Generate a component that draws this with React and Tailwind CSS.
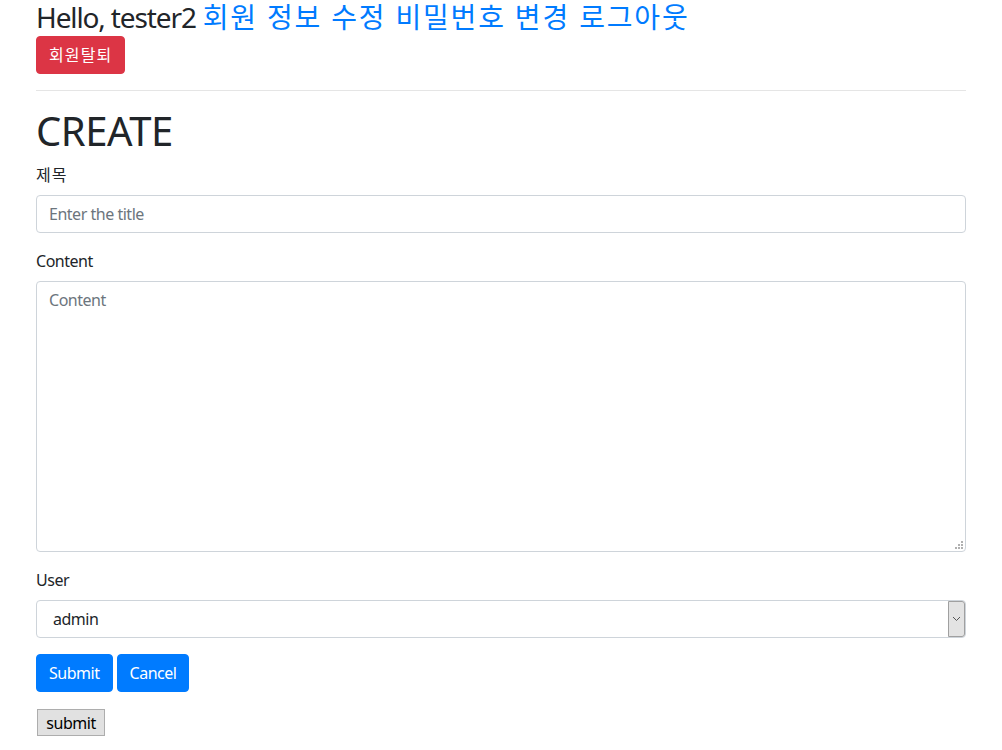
export default function App() {
  const font = { fontFamily: '"Noto Sans", "Noto Sans CJK KR", sans-serif' };
  return (
    <div className="min-h-screen bg-white text-[#212529] tracking-[-0.03em]" style={font}>
      <div className="mx-auto w-[960px] px-[15px]">
        <h3 className="text-[28px] leading-[34px] font-normal mt-0 mb-[2px] whitespace-nowrap">
          <span className="tracking-[-0.04em]">Hello, tester2</span>{" "}
          <span className="tracking-[0.065em]">
            <a className="text-[#007bff]" href="#">회원 정보 수정</a>{" "}
            <a className="text-[#007bff]" href="#">비밀번호 변경</a>{" "}
            <a className="text-[#007bff]" href="#">로그아웃</a>
          </span>
        </h3>
        <button className="bg-[#dc3545] text-white text-[16px] leading-[24px] tracking-[0.07em] px-3 py-[6px] rounded-[4px] border border-[#dc3545]">
          회원탈퇴
        </button>
        <hr className="mt-4 mb-4 border-0 border-t border-[rgba(0,0,0,0.1)]" />
        <h1 className="text-[40px] leading-[48px] font-normal mb-2">CREATE</h1>
        <div className="mb-4">
          <label className="block text-[16px] leading-[24px] mb-2 tracking-[0.07em]">제목</label>
          <div className="h-[38px] w-full border border-[#ced4da] rounded-[4px] px-3 flex items-center text-[16px] text-[#6c757d]">
            Enter the title
          </div>
        </div>
        <div className="mb-4">
          <label className="block text-[16px] leading-[24px] mb-2">Content</label>
          <div className="relative h-[271px] w-full border border-[#ced4da] rounded-[4px] px-3 py-[6px] text-[16px] leading-[24px] text-[#6c757d]">
            Content
            <svg className="absolute right-[2px] bottom-[2px]" width="8" height="8" viewBox="0 0 8 8">
              <rect x="6" y="0" width="2" height="2" fill="#b0b0b0" />
              <rect x="3" y="3" width="2" height="2" fill="#b0b0b0" />
              <rect x="6" y="3" width="2" height="2" fill="#b0b0b0" />
              <rect x="0" y="6" width="2" height="2" fill="#b0b0b0" />
              <rect x="3" y="6" width="2" height="2" fill="#b0b0b0" />
              <rect x="6" y="6" width="2" height="2" fill="#b0b0b0" />
            </svg>
          </div>
        </div>
        <div className="mb-4">
          <label className="block text-[16px] leading-[24px] mb-2">User</label>
          <div className="h-[38px] w-full border border-[#ced4da] rounded-[4px] flex items-stretch text-[16px]">
            <div className="flex-1 flex items-center pl-4">admin</div>
            <div className="w-[17px] bg-[#e3e3e3] border border-[#a0a0a0] rounded-r-[3px] flex items-center justify-center">
              <svg width="9" height="6" viewBox="0 0 9 6">
                <path d="M1 1 L4.5 4.5 L8 1" fill="none" stroke="#555" strokeWidth="1" />
              </svg>
            </div>
          </div>
        </div>
        <div className="flex gap-1">
          <button className="bg-[#007bff] text-white text-[16px] leading-[24px] px-3 py-[6px] rounded-[4px] border border-[#007bff]">
            Submit
          </button>
          <button className="bg-[#007bff] text-white text-[16px] leading-[24px] px-3 py-[6px] rounded-[4px] border border-[#007bff]">
            Cancel
          </button>
        </div>
        <div className="mt-[17px]">
          <button className="ml-[1px] w-[68px] h-[27px] bg-[#e1e1e1] border border-[#adadad] text-[16px] leading-[20px] text-black flex items-center justify-center">
            submit
          </button>
        </div>
      </div>
    </div>
  );
}
